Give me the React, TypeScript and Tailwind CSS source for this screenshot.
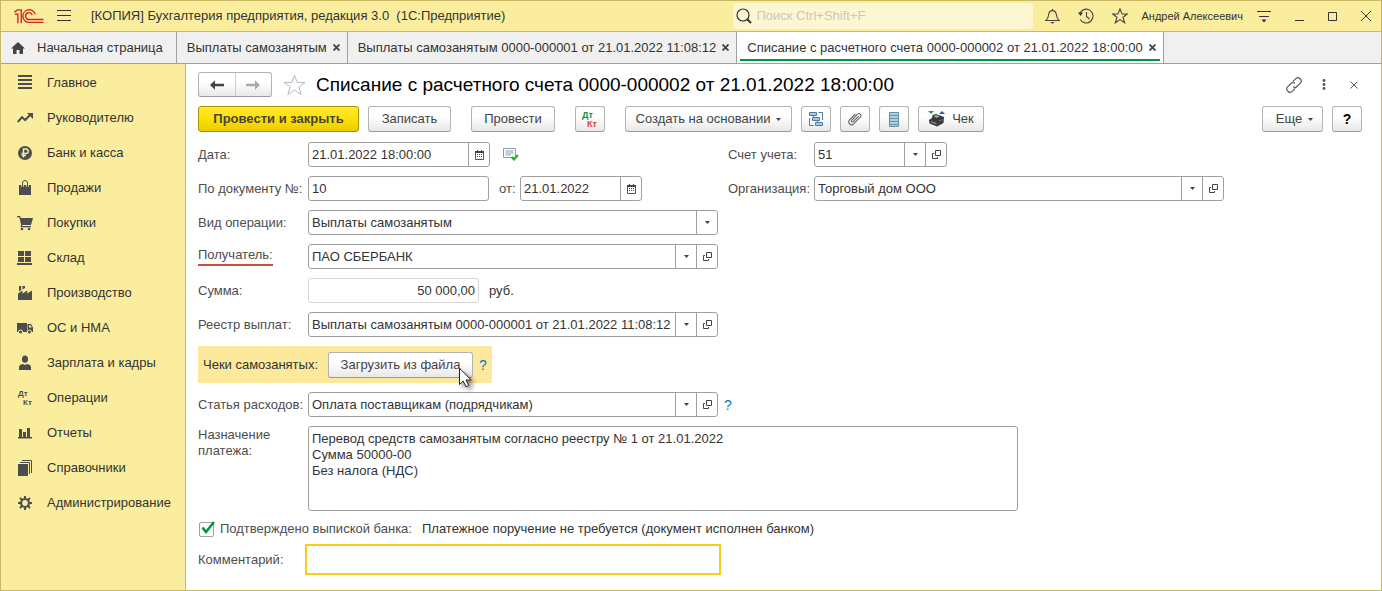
import type { ReactNode } from "react";

const INK = "#4d4d4d";

function Logo() {
  return (
    <svg width="30" height="15" viewBox="0 0 30 15" fill="none" stroke="#d9231d" strokeWidth="1.4" aria-hidden="true">
      <path d="M.4 3.2 3.4 .9H7.2V14.2" />
      <path d="M.8 5.2H3.9V14.2" />
      <path d="M21.2 5.2A6.3 6.3 0 1 0 15 13.4H29.5" />
      <path d="M18.2 6A3.4 3.4 0 1 0 15 10.5H29.5" />
    </svg>
  );
}

function Burger() {
  return (
    <svg width="14" height="12" viewBox="0 0 14 12" stroke="#333" aria-hidden="true">
      <path d="M0 .5H14M0 5.5H14M0 10.5H14" />
    </svg>
  );
}

function SmallX() {
  return (
    <svg width="7" height="7" viewBox="0 0 7 7" stroke="#444" strokeWidth="1.8" aria-hidden="true">
      <path d="M.5 .5 6.5 6.5M6.5 .5 .5 6.5" />
    </svg>
  );
}

function Caret() {
  return (
    <svg width="5" height="3" viewBox="0 0 5 3" fill="#444" aria-hidden="true">
      <path d="M0 0H5L2.5 3Z" />
    </svg>
  );
}

function OpenIcon() {
  return (
    <svg width="9" height="9" viewBox="0 0 9 9" fill="none" stroke="#444" aria-hidden="true">
      <path d="M3.5 .5H8.5V5.5H3.5ZM2 3.5H.5V8.5H5.5V7" />
    </svg>
  );
}

function CalendarIcon() {
  return (
    <svg width="9" height="10" viewBox="0 0 9 10" aria-hidden="true">
      <path d="M.5 1.5H8.5V9.5H.5Z" fill="#fff" stroke="#555" />
      <path d="M0 1H9V3H0ZM2 0H3V2H2ZM6 0H7V2H6Z" fill="#444" />
      <path d="M2 4H3V5H2ZM4 4H5V5H4ZM6 4H7V5H6ZM2 6H3V7H2ZM4 6H5V7H4ZM6 6H7V7H6Z" fill="#444" />
    </svg>
  );
}

function MenuSvg({ children }: { children: ReactNode }) {
  return (
    <svg width="16" height="16" viewBox="0 0 16 16" fill={INK} aria-hidden="true">
      {children}
    </svg>
  );
}

const menu: { label: string; icon: ReactNode }[] = [
  { label: "Главное", icon: <path d="M1 0H15V2H1ZM1 4H15V6H1ZM1 8H15V10H1ZM1 12H15V14H1Z" /> },
  {
    label: "Руководителю",
    icon: (
      <>
        <path d="M.8 12 5 7.2 8.2 10 13.2 4.8" fill="none" stroke={INK} strokeWidth="2" />
        <path d="M10 3H16V9L14 7 12 5Z" />
      </>
    ),
  },
  {
    label: "Банк и касса",
    icon: (
      <>
        <circle cx="8" cy="8" r="7" />
        <path d="M6.5 12.5V4H9A2.2 2.2 0 0 1 9 8.5H4.5M4.5 10.5H9" fill="none" stroke="#fbed9e" strokeWidth="1.4" />
      </>
    ),
  },
  {
    label: "Продажи",
    icon: (
      <>
        <path d="M2 5H14V15H2Z" />
        <path d="M5.5 7V3.5A2.5 2.5 0 0 1 10.5 3.5V7" fill="none" stroke="#fbed9e" strokeWidth="2.4" />
        <path d="M5.5 7V3A2.5 2.5 0 0 1 10.5 3V7" fill="none" stroke={INK} strokeWidth="1" />
      </>
    ),
  },
  {
    label: "Покупки",
    icon: (
      <>
        <path d="M0 1H3.2L3.7 3H16L14 10H5.2L5 11H14V12.2H3.5L4 9.5 2.3 2.3H0Z" />
        <circle cx="5" cy="14" r="1.3" />
        <circle cx="12" cy="14" r="1.3" />
      </>
    ),
  },
  { label: "Склад", icon: <path d="M1 1H7V6H1ZM8 1H14V6H8ZM1 7H7V12H1ZM8 7H14V12H8ZM0 13H15V15H0Z" /> },
  { label: "Производство", icon: <path d="M1 15V8.5L5.5 5.5V8.5L10.2 5.5V8.5L15 5.5V15ZM2 1H4.2V5L2 6.5ZM5.5 1H8V3L5.5 4.6Z" /> },
  {
    label: "ОС и НМА",
    icon: (
      <>
        <path d="M0 3H10V12H0ZM10.5 4H14L16 7.5V12H10.5Z" />
        <path d="M12 5.2H13.6L14.8 7.5H12Z" fill="#fbed9e" />
        <circle cx="3.6" cy="12" r="2" stroke="#fbed9e" />
        <circle cx="12.4" cy="12" r="2" stroke="#fbed9e" />
      </>
    ),
  },
  {
    label: "Зарплата и кадры",
    icon: (
      <>
        <ellipse cx="8" cy="4.2" rx="3" ry="3.6" />
        <path d="M2 15V12Q2 9.6 6 9L8 10 10 9Q14 9.6 14 12V15Z" />
      </>
    ),
  },
  {
    label: "Операции",
    icon: (
      <g fontFamily="Liberation Sans, Arial, sans-serif" fontWeight="bold">
        <text x="1" y="6" fontSize="8">Дт</text>
        <text x="6" y="15" fontSize="8">Кт</text>
      </g>
    ),
  },
  { label: "Отчеты", icon: <path d="M1 12H15V13.5H1ZM2 4H5V12H2ZM6 7H9V12H6ZM10 3H13V12H10Z" /> },
  {
    label: "Справочники",
    icon: (
      <>
        <path d="M1 4H11V16H1Z" />
        <path d="M3 2.5H12.5V14M5 .5H14.5V13" fill="none" stroke={INK} />
      </>
    ),
  },
  {
    label: "Администрирование",
    icon: (
      <>
        <circle cx="8" cy="8" r="4" fill="none" stroke={INK} strokeWidth="2.2" />
        <path
          d="M8 1V3.5M8 12.5V15M1 8H3.5M12.5 8H15M3 3 4.8 4.8M11.2 11.2 13 13M3 13 4.8 11.2M11.2 4.8 13 3"
          stroke={INK}
          strokeWidth="2"
        />
      </>
    ),
  },
];

function ToolButton({ children, label, className = "" }: { children: ReactNode; label?: string; className?: string }) {
  return (
    <button
      type="button"
      aria-label={label}
      className={`flex h-[26px] shrink-0 items-center justify-center rounded-[3px] border border-[#b3b3b3] border-b-[#9a9a9a] bg-linear-to-b from-white from-40% to-[#e8e8e8] text-[#444] ${className}`}
    >
      {children}
    </button>
  );
}

function Field({ id, label, children }: { id: string; label: string; children: ReactNode }) {
  return (
    <div className="flex items-center">
      <label htmlFor={id} className="w-[110px] shrink-0 whitespace-nowrap">
        {label}
      </label>
      {children}
    </div>
  );
}

const frame = "flex h-[25px] rounded-[3px] border border-[#a0a0a0] bg-white text-[#333]";
const cell = "flex w-[21px] shrink-0 items-center justify-center border-l border-[#a0a0a0]";

function Combo({ id, value, open = true, className }: { id: string; value: string; open?: boolean; className: string }) {
  return (
    <div className={`${frame} ${className}`}>
      <div className="grid min-w-0 flex-1">
        <select id={id} className="col-start-1 row-start-1 min-w-0 appearance-none pr-6 pl-[3px] outline-none">
          <option>{value}</option>
        </select>
        <span className={`${cell} pointer-events-none col-start-1 row-start-1 justify-self-end`}>
          <Caret />
        </span>
      </div>
      {open && (
        <button type="button" aria-label="Открыть" className={cell}>
          <OpenIcon />
        </button>
      )}
    </div>
  );
}

function DateInput({ id, value, className }: { id: string; value: string; className: string }) {
  return (
    <div className={`${frame} ${className}`}>
      <input id={id} defaultValue={value} className="min-w-0 flex-1 px-[3px] outline-none" />
      <button type="button" aria-label="Выбрать дату" className={cell}>
        <CalendarIcon />
      </button>
    </div>
  );
}

function TitleBar() {
  return (
    <header className="flex h-[31px] items-center border-b border-[#c9b863] bg-[#fbed9e] text-[#333]">
      <div className="flex min-w-0 flex-1 items-center pl-[13px]">
        <Logo />
        <button type="button" aria-label="Меню" className="ml-[13px]">
          <Burger />
        </button>
        <h1 className="ml-5 truncate text-[13px]">[КОПИЯ] Бухгалтерия предприятия, редакция 3.0&nbsp; (1С:Предприятие)</h1>
      </div>
      <label className="flex h-[26px] w-[300px] items-center gap-1 rounded-[3px] bg-[#fdf6d3] pl-[3px]">
        <svg width="16" height="16" viewBox="0 0 16 16" fill="none" stroke="#333" aria-hidden="true">
          <circle cx="7" cy="7" r="6" strokeWidth="1.2" />
          <path d="M11 11 15 15" strokeWidth="2" />
        </svg>
        <input
          aria-label="Поиск"
          placeholder="Поиск Ctrl+Shift+F"
          className="min-w-0 flex-1 text-[13px] outline-none placeholder:text-[#cbc7bb]"
        />
      </label>
      <div className="flex items-center pr-[10px] pl-3">
        <button type="button" aria-label="Уведомления">
          <svg width="15" height="16" viewBox="0 0 15 16" fill="none" stroke="#444" strokeWidth="1.1" aria-hidden="true">
            <path d="M7.5 1V2.5M.8 12.5H14.2Q11.6 10.5 11.4 6.8 11 2.6 7.5 2.6 4 2.6 3.6 6.8 3.4 10.5 .8 12.5Z" />
            <path d="M5.5 14H9.5L7.5 15.8Z" fill="#333" stroke="none" />
          </svg>
        </button>
        <button type="button" aria-label="История" className="ml-[18px]">
          <svg width="16" height="16" viewBox="0 0 16 16" fill="none" stroke="#444" strokeWidth="1.1" aria-hidden="true">
            <path d="M2 5A6.9 6.9 0 1 1 2.2 11.5M8.5 4V8.5L11.5 11" />
            <path d="M0 4.5H5L2.5 8Z" fill="#333" stroke="none" />
          </svg>
        </button>
        <button type="button" aria-label="Избранное" className="ml-[18px]">
          <svg width="16" height="16" viewBox="0 0 16 16" fill="none" stroke="#444" strokeWidth="1.1" aria-hidden="true">
            <path d="M8 .9 10 6H15.3L11 9.3 12.7 14.8 8 11.6 3.3 14.8 5 9.3 .7 6H6Z" />
          </svg>
        </button>
        <span className="ml-[13px] text-[11px] whitespace-nowrap">Андрей Алексеевич</span>
        <button type="button" aria-label="Настройки" className="ml-[14px]">
          <svg width="14" height="13" viewBox="0 0 14 13" stroke="#333" aria-hidden="true">
            <path d="M0 1.5H14M2 6.5H12" />
            <path d="M4.5 9.5H9.5L7 12.5Z" fill="#333" stroke="none" />
          </svg>
        </button>
        <button type="button" aria-label="Свернуть" className="ml-6">
          <svg width="9" height="10" viewBox="0 0 9 10" stroke="#333" aria-hidden="true">
            <path d="M0 9.5H9" />
          </svg>
        </button>
        <button type="button" aria-label="Развернуть" className="ml-6">
          <svg width="9" height="9" viewBox="0 0 9 9" fill="none" stroke="#333" aria-hidden="true">
            <path d="M.5 .5H8.5V8.5H.5Z" />
          </svg>
        </button>
        <button type="button" aria-label="Закрыть" className="ml-6">
          <svg width="10" height="10" viewBox="0 0 10 10" stroke="#333" aria-hidden="true">
            <path d="M0 0 10 10M10 0 0 10" />
          </svg>
        </button>
      </div>
    </header>
  );
}

function TabStrip() {
  const tab = "flex shrink-0 items-center border-r border-[#a0a0a0]";
  return (
    <nav className="flex h-8 border-b border-[#a0a0a0] bg-[#f0f0f0] text-[13px] whitespace-nowrap text-[#333]">
      <a href="#home" className={`${tab} gap-3 pr-[13px] pl-[10px]`}>
        <svg width="14" height="12" viewBox="0 0 14 12" fill="#444" aria-hidden="true">
          <path d="M7 0 14 6.6H12V12H8.5V8H5.5V12H2V6.6H0Z" />
        </svg>
        Начальная страница
      </a>
      <div className={`${tab} gap-[6px] pr-[7px] pl-[10px]`}>
        <a href="#list">Выплаты самозанятым</a>
        <button type="button" aria-label="Закрыть вкладку"><SmallX /></button>
      </div>
      <div className={`${tab} gap-[6px] pr-[7px] pl-[10px]`}>
        <a href="#payout">Выплаты самозанятым 0000-000001 от 21.01.2022 11:08:12</a>
        <button type="button" aria-label="Закрыть вкладку"><SmallX /></button>
      </div>
      <div className={`${tab} bg-white px-[3px]`}>
        <div className="flex h-full flex-col pt-1 pb-[2px]">
          <div className="flex flex-1 items-center gap-[6px] border-b-2 border-[#009646] pr-1 pl-[7px]">
            <a href="#writeoff" aria-current="page">Списание с расчетного счета 0000-000002 от 21.01.2022 18:00:00</a>
            <button type="button" aria-label="Закрыть вкладку"><SmallX /></button>
          </div>
        </div>
      </div>
    </nav>
  );
}

function Sidebar() {
  return (
    <nav className="w-[185px] shrink-0 border-r border-[#c9b863] bg-[#fbed9e] pt-[1px] text-[13px] text-[#333]">
      <ul>
        {menu.map((item) => (
          <li key={item.label}>
            <a href="#section" className="flex h-[35px] items-center gap-[14px] pl-4 whitespace-nowrap">
              <MenuSvg>{item.icon}</MenuSvg>
              {item.label}
            </a>
          </li>
        ))}
      </ul>
    </nav>
  );
}

function FormHeader() {
  return (
    <div className="flex h-[25px] items-center">
      <div className="flex h-[25px] w-[74px] shrink-0 rounded-[3px] border border-[#b3b3b3] border-b-[#9a9a9a] bg-linear-to-b from-white from-40% to-[#e8e8e8]">
        <button type="button" aria-label="Назад" className="flex flex-1 items-center justify-center border-r border-[#ccc]">
          <svg width="14" height="10" viewBox="0 0 14 10" fill="#444" aria-hidden="true">
            <path d="M0 5 5 .2V3.8H14V6.2H5V9.8Z" />
          </svg>
        </button>
        <button type="button" aria-label="Вперед" className="flex flex-1 items-center justify-center">
          <svg width="14" height="10" viewBox="0 0 14 10" fill="#aaa" aria-hidden="true">
            <path d="M14 5 9 .2V3.8H0V6.2H9V9.8Z" />
          </svg>
        </button>
      </div>
      <button type="button" aria-label="В избранное" className="ml-[11px]">
        <svg width="23" height="22" viewBox="0 0 23 22" fill="#fff" stroke="#b5bac2" aria-hidden="true">
          <path d="M11.5 1.2 14.2 8.4H22L15.8 12.9 18.2 20.6 11.5 16 4.8 20.6 7.2 12.9 1 8.4H8.8Z" />
        </svg>
      </button>
      <h2 className="ml-[10px] min-w-0 flex-1 truncate text-[19px] leading-6 text-black">
        Списание с расчетного счета 0000-000002 от 21.01.2022 18:00:00
      </h2>
      <div className="flex items-center pr-1">
        <button type="button" aria-label="Ссылка">
          <svg width="16" height="16" viewBox="0 0 16 16" fill="none" stroke="#555" strokeWidth="1.1" aria-hidden="true">
            <path d="M6.8 4.6 9.6 1.8A2.9 2.9 0 0 1 14.2 6.3L11 9.5A2.9 2.9 0 0 1 7 9.6" />
            <path d="M9.2 11.4 6.4 14.2A2.9 2.9 0 0 1 1.8 9.7L5 6.5A2.9 2.9 0 0 1 9 6.4" />
          </svg>
        </button>
        <button type="button" aria-label="Дополнительно" className="ml-5">
          <svg width="4" height="11" viewBox="0 0 4 11" fill="#555" aria-hidden="true">
            <circle cx="2" cy="1.5" r="1.4" />
            <circle cx="2" cy="5.5" r="1.4" />
            <circle cx="2" cy="9.5" r="1.4" />
          </svg>
        </button>
        <button type="button" aria-label="Закрыть форму" className="ml-6">
          <svg width="8" height="8" viewBox="0 0 8 8" stroke="#555" aria-hidden="true">
            <path d="M.5 .5 7.5 7.5M7.5 .5 .5 7.5" />
          </svg>
        </button>
      </div>
    </div>
  );
}

function Toolbar() {
  return (
    <div className="mt-[9px] flex items-center gap-[9px]">
      <button
        type="button"
        className="h-[26px] w-[161px] shrink-0 rounded-[3px] border border-[#a99400] bg-linear-to-b from-[#ffea2e] via-[#ffe000] to-[#ebcb00] text-[13px] font-bold text-[#444]"
      >
        Провести и закрыть
      </button>
      <ToolButton className="mr-[11px] w-[83px]">Записать</ToolButton>
      <ToolButton className="mr-[11px] w-[84px]">Провести</ToolButton>
      <ToolButton label="Проводки Дт/Кт" className="mr-[11px] w-[30px]">
        <svg width="18" height="18" viewBox="0 0 18 18" fontFamily="Liberation Sans, Arial, sans-serif" fontSize="9" fontWeight="bold" aria-hidden="true">
          <text x="1" y="8" fill="#009646">Дт</text>
          <text x="6" y="17" fill="#e03c3c">Кт</text>
        </svg>
      </ToolButton>
      <ToolButton className="w-[167px] gap-[6px]">
        Создать на основании
        <Caret />
      </ToolButton>
      <ToolButton label="Структура подчиненности" className="w-[30px]">
        <svg width="16" height="16" viewBox="0 0 16 16" fill="#a9c9de" stroke="#4c7ea3" aria-hidden="true">
          <path d="M1.5 1.5H8.5V4.5H1.5ZM4.5 6.5H11.5V9.5H4.5ZM7.5 11.5H14.5V14.5H7.5Z" />
          <path d="M10.5 1.5H14.5V9M1.5 7V14.5H5.5M5.5 4.5V6.5M9.5 9.5V11.5" fill="none" />
        </svg>
      </ToolButton>
      <ToolButton label="Присоединенные файлы" className="w-[30px]">
        <svg width="14" height="14" viewBox="0 0 14 14" fill="none" stroke="#666" strokeWidth="1.1" aria-hidden="true">
          <path d="M10.6 4.2 5 9.8A1 1 0 0 1 3.6 8.4L9.6 2.2A1.9 1.9 0 0 1 12.4 4.9L5.6 11.8A2.8 2.8 0 0 1 1.6 7.8L7.4 2" />
        </svg>
      </ToolButton>
      <ToolButton label="Реестр" className="w-[30px]">
        <svg width="10" height="15" viewBox="0 0 10 15" fill="#b4cfe0" stroke="#6790ad" aria-hidden="true">
          <path d="M.5 .5H9.5V14.5H.5Z" />
          <path d="M1 3.5H9M1 6.5H9M1 9.5H9M1 12.5H9" />
        </svg>
      </ToolButton>
      <ToolButton className="w-[66px] gap-[7px]">
        <svg width="17" height="16" viewBox="0 0 17 16" aria-hidden="true">
          <path d="M0 0H6L3 3Z" fill="#14a04a" />
          <path d="M11 3H17L14 0Z" fill="#2f4fc4" />
          <path d="M1 9 4 7 4.5 4 8 3 12 4.5 16 6 15.5 12 9 15.5 1.5 12.5Z" fill="#3a3a3a" />
          <path d="M5.5 5 8.5 4 11.5 5.6 8.5 7Z" fill="#aaa" />
          <path d="M3 10 8.5 12V13.5L3 11.6Z" fill="#888" />
          <path d="M11 9.5 14.5 8V9L11 10.6Z" fill="#777" />
        </svg>
        Чек
      </ToolButton>
      <div className="flex-1" />
      <ToolButton className="w-[61px] gap-[6px] pl-1">
        Еще
        <Caret />
      </ToolButton>
      <ToolButton label="Справка" className="w-[30px] text-[14px] font-bold text-black">?</ToolButton>
    </div>
  );
}

function Pointer() {
  return (
    <svg width="22" height="26" viewBox="0 0 22 26" aria-hidden="true" className="pointer-events-none absolute top-[15px] left-[130px] drop-shadow-[3px_3px_2px_rgba(0,0,0,0.45)]">
      <path d="M1.5 1.3V17.5L5.2 14 8 19.8 10.8 18.5 8 13H13.2Z" fill="#fff" stroke="#223" />
    </svg>
  );
}

export default function App() {
  return (
    <div className="flex min-h-screen flex-col border border-[#c9b863] bg-white font-['Liberation_Sans',Arial,sans-serif] text-[13px] leading-4 text-[#4d4d4d]">
      <TitleBar />
      <TabStrip />
      <div className="flex flex-1">
        <Sidebar />
        <main className="min-w-0 flex-1 pt-2 pr-[19px] pb-[17px] pl-3">
          <FormHeader />
          <Toolbar />
          <form className="mt-[10px] flex flex-col gap-[9px]">
            <div className="grid grid-cols-[530px_minmax(0,496px)] gap-y-[9px]">
              <Field id="date" label="Дата:">
                <DateInput id="date" value="21.01.2022 18:00:00" className="w-[182px]" />
                <svg width="16" height="13" viewBox="0 0 16 13" className="ml-[13px]" aria-label="Проведен" role="img">
                  <path d="M.5 .5H12.5V9.5H.5Z" fill="#fff" stroke="#8a9aab" />
                  <path d="M2.5 3H10.5M2.5 5H10.5M2.5 7H8" stroke="#8a9aab" />
                  <path d="M8.5 9 11 11.5 15 7" fill="none" stroke="#2eb135" strokeWidth="2.2" />
                </svg>
              </Field>
              <div className="flex items-center">
                <label htmlFor="account" className="w-[86px] shrink-0">Счет учета:</label>
                <Combo id="account" value="51" className="w-[133px]" />
              </div>
              <Field id="docno" label="По документу №:">
                <input id="docno" defaultValue="10" className={`${frame} w-[181px] px-[3px] outline-none`} />
                <label htmlFor="docdate" className="w-[31px] pl-[10px]">от:</label>
                <DateInput id="docdate" value="21.01.2022" className="w-[122px]" />
              </Field>
              <div className="flex items-center">
                <label htmlFor="org" className="w-[86px] shrink-0">Организация:</label>
                <Combo id="org" value="Торговый дом ООО" className="min-w-0 flex-1" />
              </div>
            </div>

            <Field id="kind" label="Вид операции:">
              <Combo id="kind" value="Выплаты самозанятым" open={false} className="w-[410px]" />
            </Field>
            <div className="flex items-center">
              <div className="flex h-[25px] w-[110px] shrink-0 items-end pb-[3px]">
                <label htmlFor="payee" className="border-b-2 border-[#c8503f] pb-[1px]">Получатель:</label>
              </div>
              <Combo id="payee" value="ПАО СБЕРБАНК" className="w-[410px]" />
            </div>
            <Field id="sum" label="Сумма:">
              <input
                id="sum"
                readOnly
                defaultValue="50 000,00"
                className="h-[25px] w-[171px] rounded-[3px] border border-[#d5d5d5] bg-white px-[3px] text-right text-[#333] outline-none"
              />
              <span className="ml-[10px] text-[#333]">руб.</span>
            </Field>
            <Field id="registry" label="Реестр выплат:">
              <Combo id="registry" value="Выплаты самозанятым 0000-000001 от 21.01.2022 11:08:12" className="w-[410px]" />
            </Field>

            <div className="flex h-[37px] w-[294px] items-center bg-[#fde99b] pl-[5px]">
              <span className="w-[125px] shrink-0 text-[#333]">Чеки самозанятых:</span>
              <div className="relative">
                <ToolButton className="w-[145px]">Загрузить из файла</ToolButton>
                <Pointer />
              </div>
              <a href="#help" className="ml-[6px] text-[14px] text-[#0b73b8]">?</a>
            </div>

            <Field id="article" label="Статья расходов:">
              <Combo id="article" value="Оплата поставщикам (подрядчикам)" className="w-[410px]" />
              <a href="#help" className="ml-[6px] text-[14px] text-[#0b73b8]">?</a>
            </Field>
            <div className="flex items-start">
              <label htmlFor="purpose" className="w-[110px] shrink-0 pt-[1px]">
                Назначение
                <br />
                платежа:
              </label>
              <textarea
                id="purpose"
                defaultValue={"Перевод средств самозанятым согласно реестру № 1 от 21.01.2022\nСумма 50000-00\nБез налога (НДС)"}
                className="h-[85px] w-[710px] resize-none rounded-[3px] border border-[#a0a0a0] bg-white px-[3px] pt-1 text-[#333] outline-none"
              />
            </div>
            <div className="flex h-[18px] items-center">
              <label className="flex items-center gap-[5px]">
                <span className="grid pl-[1px]">
                  <input
                    type="checkbox"
                    defaultChecked
                    className="col-start-1 row-start-1 h-[15px] w-[15px] appearance-none self-end rounded-[2px] border border-[#a0a0a0] bg-white"
                  />
                  <svg width="16" height="16" viewBox="0 0 16 16" className="pointer-events-none col-start-1 row-start-1" aria-hidden="true">
                    <path d="M3.5 6.5 7 11 15 1" fill="none" stroke="#009646" strokeWidth="2.6" />
                  </svg>
                </span>
                Подтверждено выпиской банка:
              </label>
              <span className="ml-[10px] text-[#333]">Платежное поручение не требуется (документ исполнен банком)</span>
            </div>
            <Field id="comment" label="Комментарий:">
              <input id="comment" className="h-[25px] w-[410px] bg-white px-[3px] outline-2 outline-offset-1 outline-[#f9cb1a]" />
            </Field>
          </form>
        </main>
      </div>
    </div>
  );
}
